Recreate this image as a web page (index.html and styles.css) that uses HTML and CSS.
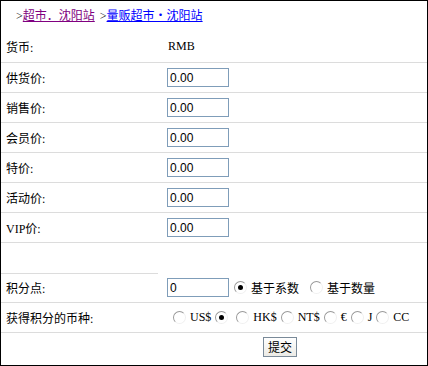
FILE: index.html
```html
<!DOCTYPE html>
<html>

<head>
  <title>商品价格</title>
  <link rel="stylesheet" href="styles.css">
</head>

<body>
  <div class="box">
    <div class="crumbs">
      &gt;<a href="#" class="visited">超市．沈阳站</a>
      &gt;<a href="#">量贩超市・沈阳站</a>
    </div>

    <div class="row first">
      <span class="label">货币:</span>
      <span class="value">RMB</span>
    </div>
    <div class="row">
      <span class="label">供货价:</span>
      <input type="text" class="price" value="0.00">
    </div>
    <div class="row">
      <span class="label">销售价:</span>
      <input type="text" class="price" value="0.00">
    </div>
    <div class="row">
      <span class="label">会员价:</span>
      <input type="text" class="price" value="0.00">
    </div>
    <div class="row">
      <span class="label">特价:</span>
      <input type="text" class="price" value="0.00">
    </div>
    <div class="row">
      <span class="label">活动价:</span>
      <input type="text" class="price" value="0.00">
    </div>
    <div class="row">
      <span class="label">VIP价:</span>
      <input type="text" class="price" value="0.00">
    </div>

    <div class="row blank"></div>

    <div class="row points">
      <span class="label">积分点:</span>
      <input type="text" class="price" value="0">
      <label class="opt"><input type="radio" name="base" checked> 基于系数</label>
      <label class="opt"><input type="radio" name="base"> 基于数量</label>
    </div>

    <div class="row">
      <span class="label">获得积分的币种:</span>
      <div class="coins">
        <label><input type="radio" name="coin">US$</label>
        <label><input type="radio" name="coin" checked></label>
        <label><input type="radio" name="coin">HK$</label>
        <label><input type="radio" name="coin">NT$</label>
        <label><input type="radio" name="coin">€</label>
        <label><input type="radio" name="coin">J</label>
        <label><input type="radio" name="coin">CC</label>
      </div>
    </div>

    <div class="submit">
      <input type="submit" value="提交">
    </div>
  </div>
</body>

</html>
```

FILE: styles.css
```css
body {
  margin: 0;
  background: white;
  font-family: "Liberation Serif", "Noto Sans CJK SC", serif;
  font-size: 12px;
  color: black;
}

.box {
  width: 428px;
  height: 366px;
  box-sizing: border-box;
  border: 1px solid black;
}

.crumbs {
  height: 30px;
  line-height: 30px;
  padding-left: 15px;
}

.crumbs a {
  color: #0000ff;
  margin-right: 2px;
}

.crumbs a.visited {
  color: #800080;
}

.row {
  display: flex;
  align-items: center;
  height: 29px;
  border-bottom: 1px solid #dcdcdc;
}

.row.first {
  height: 31px;
}

.label {
  width: 161px;
  padding-left: 5px;
  flex-shrink: 0;
}

.value {
  padding-left: 1px;
}

input[type=text] {
  width: 62px;
  height: 19px;
  box-sizing: border-box;
  border: 1px solid #7f9db9;
  padding: 0 2px;
  margin: 0;
  font-family: "Liberation Sans", sans-serif;
  font-size: 12px;
}

.row.blank {
  border-bottom: none;
  height: 30px;
}

.row.points {
  background: linear-gradient(#dcdcdc, #dcdcdc) no-repeat 0 0 / 157px 1px;
}

.opt {
  display: flex;
  align-items: center;
  margin-left: 5px;
}

.opt + .opt {
  margin-left: 11px;
}

.opt input {
  margin: 0 5px 0 0;
}

input[type=radio] {
  appearance: none;
  -webkit-appearance: none;
  width: 13px;
  height: 13px;
  box-sizing: border-box;
  border-radius: 50%;
  border: 1px solid;
  border-color: #9a9a9a #f0f0f0 #f0f0f0 #9a9a9a;
  background: white;
  position: relative;
  margin: 0 4px 0 0;
}

input[type=radio]:checked::after {
  content: "";
  position: absolute;
  left: 3px;
  top: 3px;
  width: 5px;
  height: 5px;
  border-radius: 50%;
  background: black;
}

.coins {
  display: flex;
  align-items: center;
  margin-left: 6px;
}

.coins label {
  display: flex;
  align-items: center;
  margin-right: 4px;
}

.submit {
  display: flex;
  padding-top: 4px;
  padding-left: 262px;
}

input[type=submit] {
  height: 20px;
  padding: 0 4px;
  border: 1px solid #7a8a99;
  background: linear-gradient(white, #ecebe6);
  font-family: "Liberation Serif", "Noto Sans CJK SC", serif;
  font-size: 12px;
}
```
